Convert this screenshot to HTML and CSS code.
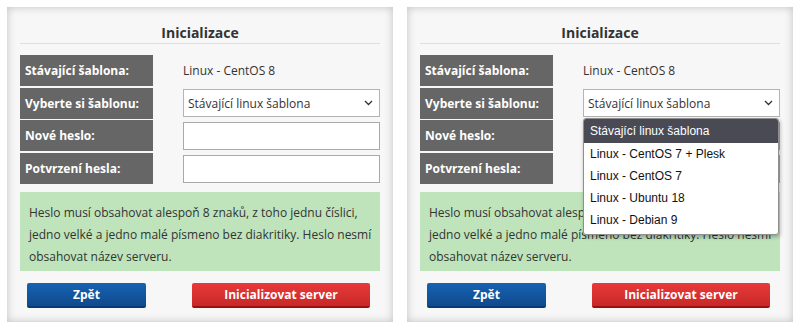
FILE: index.html
```html
<!DOCTYPE html>
<html lang="cs">
<head>
<meta charset="utf-8">
<link rel="stylesheet" href="styles.css">
</head>
<body>
<div class="panel">
  <h2 class="title">Inicializace</h2>
  <div class="rows">
    <div class="row"><div class="label">Stávající šablona:</div><div class="field"><span class="value">Linux - CentOS 8</span></div></div>
    <div class="row"><div class="label">Vyberte si šablonu:</div><div class="field"><div class="select"><span>Stávající linux šablona</span><svg class="chev" width="9" height="6" viewBox="0 0 9 6"><path d="M1 1l3.5 3.5L8 1" fill="none" stroke="#333" stroke-width="1.3"/></svg></div></div></div>
    <div class="row"><div class="label">Nové heslo:</div><div class="field"><div class="input"></div></div></div>
    <div class="row"><div class="label">Potvrzení hesla:</div><div class="field"><div class="input"></div></div></div>
  </div>
  <div class="note">Heslo musí obsahovat alespoň 8 znaků, z toho jednu číslici, jedno velké a jedno malé písmeno bez diakritiky. Heslo nesmí obsahovat název serveru.</div>
  <div class="buttons"><button class="btn btn-blue">Zpět</button><button class="btn btn-red">Inicializovat server</button></div>
</div>
<div class="panel">
  <h2 class="title">Inicializace</h2>
  <div class="rows">
    <div class="row"><div class="label">Stávající šablona:</div><div class="field"><span class="value">Linux - CentOS 8</span></div></div>
    <div class="row"><div class="label">Vyberte si šablonu:</div><div class="field open"><div class="select"><span>Stávající linux šablona</span><svg class="chev" width="9" height="6" viewBox="0 0 9 6"><path d="M1 1l3.5 3.5L8 1" fill="none" stroke="#333" stroke-width="1.3"/></svg></div>
      <ul class="dropdown">
        <li class="sel">Stávající linux šablona</li>
        <li>Linux - CentOS 7 + Plesk</li>
        <li>Linux - CentOS 7</li>
        <li>Linux - Ubuntu 18</li>
        <li>Linux - Debian 9</li>
      </ul></div></div>
    <div class="row"><div class="label">Nové heslo:</div><div class="field"><div class="input"></div></div></div>
    <div class="row"><div class="label">Potvrzení hesla:</div><div class="field"><div class="input"></div></div></div>
  </div>
  <div class="note">Heslo musí obsahovat alespoň 8 znaků, z toho jednu číslici, jedno velké a jedno malé písmeno bez diakritiky. Heslo nesmí obsahovat název serveru.</div>
  <div class="buttons"><button class="btn btn-blue">Zpět</button><button class="btn btn-red">Inicializovat server</button></div>
</div>
</body>
</html>
```
FILE: styles.css
```css
* { box-sizing: border-box; }
html, body { margin: 0; background: #fff; }
body {
  display: flex;
  gap: 14px;
  padding: 7px;
  font-family: "Open Sans", "DejaVu Sans", sans-serif;
  color: #333;
}
.panel {
  width: 386px;
  height: 315px;
  background: #f7f7f7;
  box-shadow: inset 0 0 9px rgba(0,0,0,0.22);
  padding: 16px 13px 0;
}
.title {
  margin: 0;
  font-size: 14px;
  line-height: 20px;
  font-weight: 700;
  text-align: center;
  color: #333;
  border-bottom: 1px solid #dedede;
}
.rows {
  margin-top: 11px;
  display: flex;
  flex-direction: column;
  gap: 1.7px;
}
.row {
  display: grid;
  grid-template-columns: 133px 1fr;
  column-gap: 30px;
  height: 31px;
}
.label {
  background: #666;
  color: #fff;
  font-weight: 700;
  font-size: 12px;
  padding-left: 5px;
  display: flex;
  align-items: center;
}
.field {
  display: flex;
  align-items: center;
  position: relative;
}
.value { font-size: 12px; color: #333; }
.select, .input {
  width: 100%;
  height: 28px;
  background: #fff;
  border: 1px solid #b4b4b4;
}
.select {
  display: flex;
  align-items: center;
  justify-content: space-between;
  padding: 0 6px 0 4px;
  font-size: 12px;
  color: #333;
}
.input { border-color: #a9a9a9; }
.dropdown {
  position: absolute;
  left: 0;
  top: 30px;
  width: 196px;
  margin: 0;
  padding: 0 0 3px;
  list-style: none;
  background: #fff;
  border: 1px solid #8f8f8f;
  border-radius: 3px;
  box-shadow: 1px 2px 4px rgba(0,0,0,0.3);
  font-family: "Liberation Sans", Arial, sans-serif;
  font-size: 12px;
  color: #111;
  z-index: 5;
  overflow: hidden;
}
.dropdown li {
  height: 22px;
  line-height: 22px;
  padding-left: 6px;
}
.dropdown li.sel {
  background: #4a4a55;
  color: #fff;
  height: 24px;
  line-height: 24px;
}
.note {
  margin-top: 8px;
  background: #bfe4bb;
  font-size: 12px;
  line-height: 22px;
  padding: 10px 3px 3px 9px;
  color: #333;
  height: 79px;
}
.buttons {
  display: flex;
  justify-content: space-between;
  padding: 0 10px 0 7px;
  margin-top: 12px;
}
.btn {
  height: 25px;
  border: 0;
  border-radius: 2px;
  color: #fff;
  font-family: "Open Sans", "DejaVu Sans", sans-serif;
  font-weight: 700;
  font-size: 12px;
  padding: 0;
  line-height: 23px;
}
.btn-blue {
  width: 119px;
  background: linear-gradient(#1762b3, #0f4a8c);
  border-bottom: 2px solid #063a75;
}
.btn-red {
  width: 178px;
  background: linear-gradient(#e83a3a, #c82828);
  border-bottom: 2px solid #a00d0d;
}
```
